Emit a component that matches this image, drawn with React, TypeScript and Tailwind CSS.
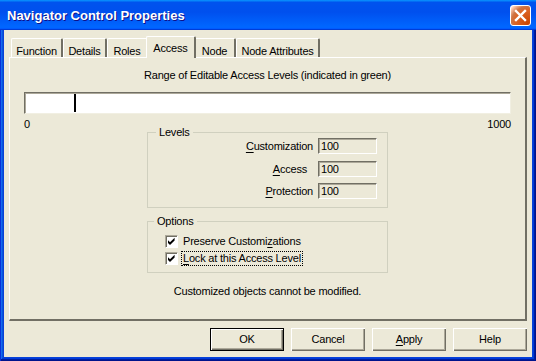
import React from "react";

const font = { fontFamily: '"Liberation Sans", Arial, sans-serif' };

function U({ children }: { children: React.ReactNode }) {
  return <span className="underline underline-offset-[2px]">{children}</span>;
}

function Tab({ label, selected, w }: { label: string; selected?: boolean; w: string }) {
  if (selected) {
    return (
      <div
        className={`relative z-10 -mx-[2px] -mb-[1px] h-[22px] ${w} flex items-start justify-center pt-[3px] bg-[#ECE9D8] border-l border-t border-white border-r-2 border-r-[#716F64] rounded-t-[2px]`}
      >
        {label}
      </div>
    );
  }
  return (
    <div
      className={`h-[19px] ${w} flex items-start justify-center pt-[4px] bg-[#ECE9D8] border-l border-t border-white border-r-2 border-r-[#716F64] rounded-t-[2px]`}
    >
      {label}
    </div>
  );
}

function Field({ value }: { value: string }) {
  return (
    <div className="w-[59px] h-[16px] bg-[#ECE9D8] border-t border-l border-t-[#716F64] border-l-[#716F64] border-b border-r border-b-white border-r-white shadow-[inset_1px_1px_0_#ACA899] pl-[2px] leading-[14px]">
      {value}
    </div>
  );
}

function Check({ children, focus }: { children: React.ReactNode; focus?: boolean }) {
  return (
    <div className="flex items-center h-[17px]">
      <div className="w-[13px] h-[13px] bg-white border-t border-l border-t-[#ACA899] border-l-[#ACA899] border-b border-r border-b-white border-r-white shadow-[inset_1px_1px_0_#716F64] flex items-center justify-center">
        <svg width="9" height="9" viewBox="0 0 9 9">
          <path d="M1 3.3 L3 5.3 L7.6 0.8 L7.6 3.4 L3 8 L1 6 Z" fill="#000" />
        </svg>
      </div>
      <div className={`ml-[4px] px-[1px] leading-[13px] ${focus ? "outline outline-1 outline-dotted outline-black" : ""}`}>
        {children}
      </div>
    </div>
  );
}

function Button({ children, def }: { children: React.ReactNode; def?: boolean }) {
  return (
    <div
      className={`w-[74px] h-[23px] flex items-center justify-center bg-[#ECE9D8] ${
        def
          ? "border border-black shadow-[inset_1px_1px_0_#fff,inset_-1px_-1px_0_#716F64,inset_-2px_-2px_0_#ACA899]"
          : "shadow-[inset_1px_1px_0_#fff,inset_-1px_-1px_0_#716F64,inset_-2px_-2px_0_#ACA899]"
      }`}
    >
      {children}
    </div>
  );
}

export default function App() {
  return (
    <div
      style={font}
      className="w-[536px] h-[361px] flex flex-col bg-[#0842D8] text-[11px] tracking-[-0.2px] text-black shadow-[inset_1px_1px_0_#0831d9,inset_-1px_-1px_0_#00138c,inset_-2px_-2px_0_#001ea0,inset_2px_2px_0_#166aee,inset_-3px_-3px_0_#003bda,inset_3px_3px_0_#0855dd] overflow-hidden"
    >
      <div className="h-[30px] shrink-0 flex items-center pl-[7px] pr-[5px] bg-[linear-gradient(180deg,#0997ff,#0053ee_8%,#0050ee_40%,#0066ff_88%,#0066ff_93%,#005bff_95%,#003dd7_96%,#003dd7)]">
        <div className="text-white font-bold text-[13px] tracking-normal [text-shadow:1px_1px_0_#0f1089] pt-[1px]">
          Navigator Control Properties
        </div>
        <div className="ml-auto w-[21px] h-[21px] rounded-[3px] border border-white bg-[radial-gradient(circle_at_90%_90%,#cc4600_0%,#dc6527_55%,#cd7546_70%,#ffccb2_90%,#fff_100%)] flex items-center justify-center">
          <svg width="13" height="13" viewBox="0 0 13 13">
            <path d="M2 2 L11 11 M11 2 L2 11" stroke="#fff" strokeWidth="2.4" strokeLinecap="square" />
          </svg>
        </div>
      </div>
      <div className="flex-1 mx-[4px] mb-[4px] bg-[#ECE9D8] flex flex-col px-[5px]">
        <div className="h-[27px] pt-[6px] pl-[2px] flex items-end relative">
          <Tab label="Function" w="w-[52px]" />
          <Tab label="Details" w="w-[44px]" />
          <Tab label="Roles" w="w-[41px]" />
          <Tab label="Access" w="w-[50px]" selected />
          <Tab label="Node" w="w-[42px]" />
          <Tab label="Node Attributes" w="w-[84px]" />
        </div>
        <div className="h-[264px] border-l border-t border-white border-r-2 border-b-2 border-r-[#716F64] border-b-[#716F64] flex flex-col items-stretch px-[14px]">
          <div className="text-center mt-[11px] leading-[13px]">
            Range of Editable Access Levels (indicated in green)
          </div>
          <div className="mt-[10px] h-[22px] bg-white border-t border-l border-t-[#716F64] border-l-[#716F64] border-b border-r border-b-[#F1EFE2] border-r-[#F1EFE2] shadow-[inset_1px_1px_0_#ACA899] flex items-stretch pl-[49px] py-[1px]">
            <div className="w-[2px] bg-black" />
          </div>
          <div className="flex justify-between mt-[4px] leading-[13px]">
            <span>0</span>
            <span>1000</span>
          </div>
          <div className="self-center w-[241px] mt-[1px] h-[76px] relative border border-[#D0D0BF] flex flex-col items-end pr-[10px] pt-[5px] gap-[6px]">
            <div className="absolute -top-[7px] left-[8px] bg-[#ECE9D8] px-[3px] leading-[13px]">Levels</div>
            <div className="flex items-center gap-[5px]">
              <span><U>C</U>ustomization</span>
              <Field value="100" />
            </div>
            <div className="flex items-center gap-[5px]">
              <span className="pr-[6px]"><U>A</U>ccess</span>
              <Field value="100" />
            </div>
            <div className="flex items-center gap-[5px]">
              <span><U>P</U>rotection</span>
              <Field value="100" />
            </div>
          </div>
          <div className="self-center w-[241px] mt-[13px] h-[52px] relative border border-[#D0D0BF] flex flex-col pl-[17px] pt-[11px]">
            <div className="absolute -top-[7px] left-[6px] bg-[#ECE9D8] px-[3px] leading-[13px]">Options</div>
            <Check>Preserve Customi<U>z</U>ations</Check>
            <Check focus><U>L</U>ock at this Access Level</Check>
          </div>
          <div className="text-center mt-[12px] leading-[13px]">Customized objects cannot be modified.</div>
        </div>
        <div className="flex justify-end gap-[7px] mt-[7px]">
          <Button def>OK</Button>
          <Button>Cancel</Button>
          <Button><U>A</U>pply</Button>
          <Button>Help</Button>
        </div>
      </div>
    </div>
  );
}
